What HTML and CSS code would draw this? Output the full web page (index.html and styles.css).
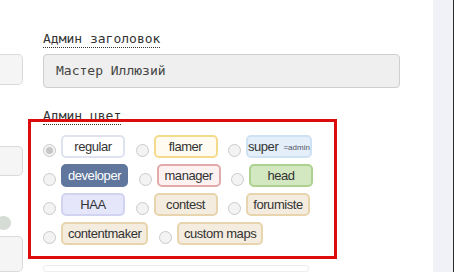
FILE: index.html
```html
<!DOCTYPE html>
<html lang="ru">
<head>
<meta charset="utf-8">
<title>Admin</title>
<link rel="stylesheet" href="styles.css">
</head>
<body>
<div class="page">
  <div class="side">
    <div class="side-box side-box--first"></div>
    <div class="side-box side-box--second"></div>
    <div class="side-dot"></div>
    <div class="side-box side-box--third"></div>
  </div>
  <main class="main">
    <div class="field-label"><span class="label-text">Админ заголовок</span></div>
    <div class="input">Мастер Иллюзий</div>
    <div class="field-label field-label--color"><span class="label-text">Админ цвет</span></div>
    <div class="group">
      <div class="options">
        <label class="opt"><span class="radio radio--checked"></span><span class="badge b-regular">regular</span></label>
        <label class="opt"><span class="radio"></span><span class="badge b-flamer">flamer</span></label>
        <label class="opt"><span class="radio"></span><span class="badge b-super">super <small class="tag">=admin</small></span></label>
        <label class="opt"><span class="radio"></span><span class="badge b-developer">developer</span></label>
        <label class="opt"><span class="radio"></span><span class="badge b-manager">manager</span></label>
        <label class="opt"><span class="radio"></span><span class="badge b-head">head</span></label>
        <label class="opt"><span class="radio"></span><span class="badge b-haa">HAA</span></label>
        <label class="opt"><span class="radio"></span><span class="badge b-tan">contest</span></label>
        <label class="opt"><span class="radio"></span><span class="badge b-tan">forumiste</span></label>
        <label class="opt"><span class="radio"></span><span class="badge b-tan">contentmaker</span></label>
        <label class="opt"><span class="radio"></span><span class="badge b-tan">custom maps</span></label>
      </div>
    </div>
    <div class="card"></div>
  </main>
  <aside class="rail"></aside>
</div>
</body>
</html>
```
FILE: styles.css
```css
html, body {
  margin: 0;
  padding: 0;
  background: #ffffff;
  overflow: hidden;
}
.page {
  display: flex;
  width: 454px;
  height: 272px;
  overflow: hidden;
}
.side {
  width: 23px;
  flex: none;
  display: flex;
  flex-direction: column;
}
.side-box {
  width: 23px;
  height: 34px;
  box-sizing: border-box;
  background: #f5f5f5;
  border: 1px solid #dadada;
  border-left: none;
  border-radius: 0 5px 5px 0;
}
.side-box--first { margin-top: 54px; }
.side-box--second { margin-top: 61px; }
.side-box--third { margin-top: 6px; height: 40px; }
.side-dot {
  margin-top: 40px;
  margin-left: -4px;
  width: 15px;
  height: 15px;
  border-radius: 50%;
  background: #d5dbd5;
}
.main {
  width: 357px;
  flex: none;
  margin-left: 20px;
  padding-top: 31px;
  display: flex;
  flex-direction: column;
  align-items: flex-start;
}
.field-label {
  font-family: "DejaVu Sans Mono", monospace;
  font-size: 13px;
  line-height: 16px;
  color: #333;
}
.label-text {
  display: inline-block;
  border-bottom: 1px dotted #333;
}
.input {
  margin-top: 6px;
  width: 357px;
  height: 34px;
  box-sizing: border-box;
  border: 1px solid #cfcfcf;
  border-radius: 4px;
  background: #efefef;
  padding-left: 12px;
  font-family: "DejaVu Sans Mono", monospace;
  font-size: 13px;
  line-height: 32px;
  color: #444;
}
.field-label--color {
  margin-top: 20px;
}
.group {
  margin-top: -6px;
  margin-left: -15px;
  width: 309px;
  box-sizing: border-box;
  border: 3px solid #dd0c0c;
  padding: 13px 12px 11px;
}
.options {
  display: flex;
  flex-wrap: wrap;
  column-gap: 10.5px;
  row-gap: 6px;
}
.opt {
  display: flex;
  align-items: flex-end;
}
.radio {
  width: 13px;
  height: 13px;
  box-sizing: border-box;
  border-radius: 50%;
  border: 1px solid #cacaca;
  background: #f3f3f3;
  margin-right: 5px;
  margin-bottom: 1px;
  display: flex;
  align-items: center;
  justify-content: center;
}
.radio--checked::after {
  content: "";
  width: 7px;
  height: 7px;
  border-radius: 50%;
  background: #c6c6c6;
}
.badge {
  display: block;
  min-width: 64px;
  height: 23px;
  box-sizing: border-box;
  border: 2px solid #dde3ef;
  border-radius: 5px;
  padding: 0 5px;
  text-align: center;
  font-family: "Liberation Sans", Arial, sans-serif;
  font-size: 13px;
  letter-spacing: -0.45px;
  line-height: 19px;
  color: #333;
  white-space: nowrap;
}
.b-regular { background: #ffffff; border-color: #dfe3f0; }
.b-flamer { background: #fffbf0; border-color: #f4db8c; }
.b-super { background: #e4eff9; border-color: #cfe2f4; padding: 0; min-width: 65px; }
.b-developer { background: #60769c; border-color: #60769c; color: #ffffff; }
.b-manager { background: #fdf1f1; border-color: #e2abab; }
.b-head { background: #d3e8c1; border-color: #acd190; }
.b-haa { background: #e5e6fa; border-color: #d2d3f1; }
.b-tan { background: #f4ecdf; border-color: #e8d4ad; }
.tag {
  font-size: 8px;
  letter-spacing: 0;
  color: #556;
  vertical-align: 1px;
  margin-left: 2px;
}
.card {
  margin-top: 6px;
  width: 266px;
  height: 40px;
  box-sizing: border-box;
  border: 1px solid #eeeeee;
  border-radius: 6px;
  background: #fff;
  box-shadow: 0 0 2px rgba(0,0,0,0.04);
}
.rail {
  margin-left: auto;
  width: 21px;
  flex: none;
  box-sizing: border-box;
  background: #f0f2f7;
  border-right: 1px solid #2a2a2a;
}
```
